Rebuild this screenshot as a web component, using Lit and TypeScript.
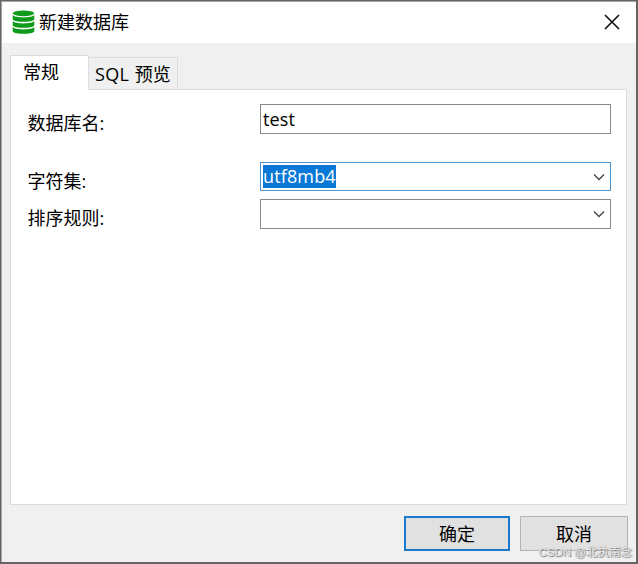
import { LitElement, html, css, svg } from "lit";
import { customElement, property } from "lit/decorators.js";

@customElement("select-field")
class SelectField extends LitElement {
  @property() value = "";
  @property({ type: Boolean, reflect: true }) active = false;

  static styles = css`
    :host {
      display: flex;
      align-items: center;
      box-sizing: border-box;
      border: 1px solid #8a8a8a;
      background: #fff;
      padding: 0 5px 0 2px;
    }
    :host([active]) {
      border-color: #4a94cf;
    }
    .value {
      height: 23px;
      line-height: 23px;
      margin-bottom: 1px;
      letter-spacing: 0.14px;
      color: #fff;
      background: #0a78d6;
      white-space: nowrap;
    }
    .arrow {
      display: block;
      margin-left: auto;
    }
  `;

  render() {
    return html`
      ${this.value ? html`<span class="value">${this.value}</span>` : null}
      <svg class="arrow" width="12" height="8" viewBox="0 0 12 8" fill="none" stroke="#444" stroke-width="1.3">
        <path d="M1 1.5 L6 6.5 L11 1.5" />
      </svg>
    `;
  }
}

@customElement("app-root")
class AppRoot extends LitElement {
  static styles = css`
    :host {
      display: block;
      width: 638px;
      height: 564px;
      font: 18px "Open Sans", "Noto Sans CJK SC", sans-serif;
      color: #000;
    }
    .dialog {
      position: relative;
      box-sizing: border-box;
      width: 638px;
      height: 564px;
      border: 1px solid #686466;
      border-right-width: 2px;
      border-bottom-width: 2px;
      background: #f0f0f0;
      box-shadow: inset 1px 1px #a5a3a4;
      display: flex;
      flex-direction: column;
      overflow: hidden;
    }
    .titlebar {
      flex: none;
      box-sizing: border-box;
      height: 41px;
      margin: 1px 0 0 1px;
      padding: 0 16px 1px 10px;
      background: #fff;
      display: flex;
      align-items: center;
    }
    .db {
      display: block;
      margin-right: 4px;
    }
    .title {
      line-height: 26px;
      flex: 1;
    }
    .tabs {
      flex: none;
      height: 34px;
      margin: 12px 9px 0 9px;
      display: flex;
      align-items: flex-end;
    }
    .tab {
      box-sizing: border-box;
      height: 32px;
      width: 89px;
      padding: 3px 0 0 6px;
      line-height: 26px;
      border: 1px solid #dcdcdc;
      border-bottom: 0;
      border-left: 0;
      white-space: nowrap;
    }
    .tab.current {
      width: 79px;
      height: 35px;
      margin-bottom: -1px;
      padding: 3px 0 0 12px;
      background: #fff;
      border-left: 1px solid #dcdcdc;
      position: relative;
    }
    .latin {
      letter-spacing: 0.3px;
      margin-right: 0.5px;
    }
    .panel {
      box-sizing: border-box;
      flex: none;
      height: 416px;
      margin: 0 9px;
      padding: 14px 15px 0 16px;
      background: #fff;
      border: 1px solid #dcdcdc;
    }
    .row {
      display: grid;
      grid-template-columns: 233px 351px;
      grid-template-rows: 100%;
      height: 30px;
    }
    .row + .row {
      margin-top: 8px;
    }
    .row.charset {
      margin-top: 28px;
      height: 29px;
    }
    .label {
      line-height: 26px;
      padding: 6px 0 0 0.6px;
    }
    .input {
      box-sizing: border-box;
      border: 1px solid #8a8a8a;
      padding-left: 2px;
      line-height: 28px;
      letter-spacing: 0.14px;
    }
    .actions {
      display: flex;
      justify-content: flex-end;
      gap: 10px;
      margin: 11px 8px 0 0;
    }
    .button {
      box-sizing: border-box;
      width: 108px;
      height: 35px;
      border: 1px solid #b4b4b4;
      background: #e1e1e1;
      text-align: center;
      line-height: 34px;
    }
    .button.primary {
      width: 106px;
      border: 2px solid #1b7acb;
      line-height: 32px;
    }
    .watermark {
      position: absolute;
      right: 4px;
      bottom: 0;
      font: 11.5px/20px "Liberation Sans", "Noto Sans CJK SC", sans-serif;
      color: #eee;
      text-shadow: 1px 1px 1px #777, 0 0 1px #999;
      white-space: nowrap;
    }
  `;

  render() {
    return html`
      <div class="dialog">
        <div class="titlebar">
          ${this.databaseIcon()}
          <span class="title">新建数据库</span>
          <svg width="16" height="16" viewBox="0 0 16 16" fill="none" stroke="#111" stroke-width="1.6">
            <path d="M1 1 L15 15 M15 1 L1 15" />
          </svg>
        </div>
        <div class="tabs">
          <div class="tab current">常规</div>
          <div class="tab"><span class="latin">SQL </span>预览</div>
        </div>
        <div class="panel">
          <div class="row">
            <span class="label">数据库名:</span>
            <div class="input">test</div>
          </div>
          <div class="row charset">
            <span class="label">字符集:</span>
            <select-field value="utf8mb4" active></select-field>
          </div>
          <div class="row">
            <span class="label">排序规则:</span>
            <select-field></select-field>
          </div>
        </div>
        <div class="actions">
          <div class="button primary">确定</div>
          <div class="button">取消</div>
        </div>
        <span class="watermark">CSDN @北执南念</span>
      </div>
    `;
  }

  private databaseIcon() {
    const bands = [5, 11, 17];
    return html`
      <svg class="db" width="23" height="25" viewBox="0 0 23 25" fill="#109a1c">
        <ellipse cx="11.5" cy="3.3" rx="10.8" ry="2.9" />
        ${bands.map(
          (y) => svg`<path d="M0.7 ${y} C2.5 ${y + 3.2} 20.5 ${y + 3.2} 22.3 ${y} V${y + 4.4} C20.5 ${y + 7.6} 2.5 ${y + 7.6} 0.7 ${y + 4.4} Z" />`
        )}
      </svg>
    `;
  }
}
